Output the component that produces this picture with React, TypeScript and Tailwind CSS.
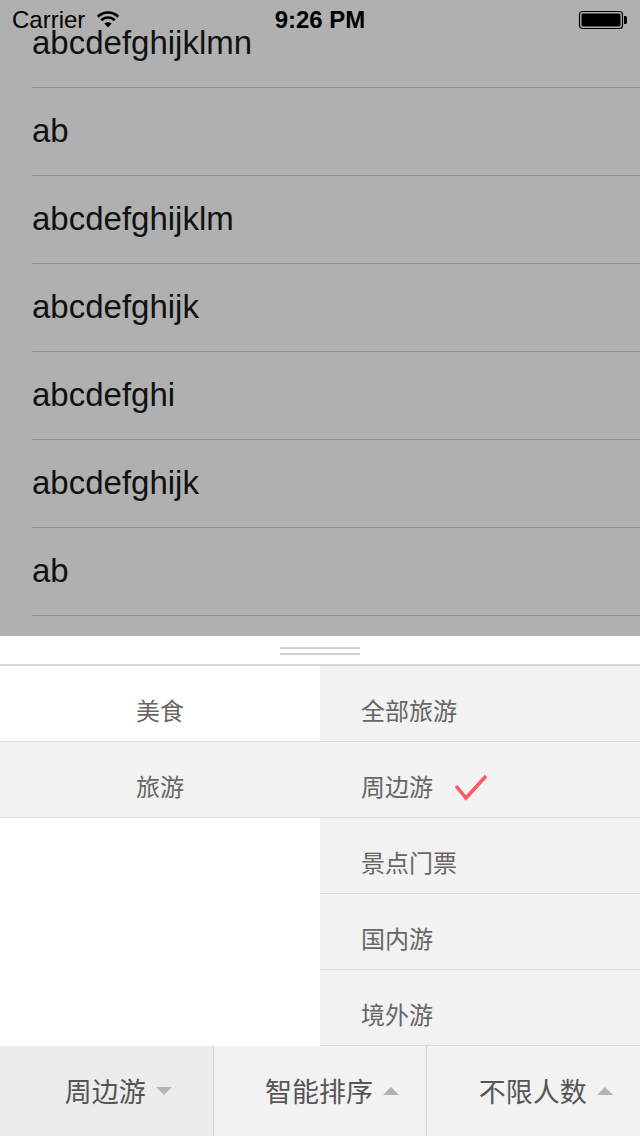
const rows = ["abcdefghijklmn", "ab", "abcdefghijklm", "abcdefghijk", "abcdefghi", "abcdefghijk", "ab", "abcdefg"];
const leftItems = ["美食", "旅游"];
const rightItems = ["全部旅游", "周边游", "景点门票", "国内游", "境外游"];
const tabs = [
  { label: "周边游", down: true },
  { label: "智能排序", down: false },
  { label: "不限人数", down: false },
];

const cjk = "font-['Noto_Sans_CJK_SC',sans-serif]";

const Wifi = () => (
  <svg width="24" height="17" viewBox="0 0 24 17" className="ml-[11px] mt-[-2px]">
    <path d="M1.75 5.75 A14.5 14.5 0 0 1 22.25 5.75" fill="none" stroke="#000" strokeWidth="2.6" />
    <path d="M5.28 9.28 A9.5 9.5 0 0 1 18.72 9.28" fill="none" stroke="#000" strokeWidth="2.6" />
    <path d="M12 16.5 L8.4 12.6 A5 5 0 0 1 15.6 12.6 Z" fill="#000" />
  </svg>
);

const Battery = () => (
  <svg width="50" height="20" viewBox="0 0 50 20">
    <rect x="1.5" y="1.5" width="43" height="17" rx="3" fill="none" stroke="#000" strokeWidth="1.2" />
    <rect x="3.5" y="3.5" width="39" height="13" rx="1.5" fill="#000" />
    <path d="M46 6 h1.5 a1.5 1.5 0 0 1 1.5 1.5 v5 a1.5 1.5 0 0 1 -1.5 1.5 h-1.5 Z" fill="#000" />
  </svg>
);

const Check = () => (
  <svg width="36" height="28" viewBox="0 0 36 28" className="ml-5 mt-[2px]">
    <polyline points="3,13 13,25 33,3" fill="none" stroke="#ff5a5f" strokeWidth="3.5" />
  </svg>
);

const Tri = ({ down }: { down: boolean }) => (
  <svg width="16" height="8" viewBox="0 0 16 8" className="ml-[10px]">
    <polygon points={down ? "0,0 16,0 8,8" : "0,8 16,8 8,0"} fill="#b3b3b3" />
  </svg>
);

export default function App() {
  return (
    <div className="relative flex h-[1136px] w-[640px] flex-col overflow-hidden bg-[#b0b0b0] font-['Liberation_Sans',Arial,sans-serif]">
      {/* status bar */}
      <div className="absolute left-0 top-0 flex h-[40px] w-full items-center px-3 text-[24px] leading-none text-black">
        <div className="flex flex-1 items-center">
          <span>Carrier</span>
          <Wifi />
        </div>
        <span className="font-bold">9:26 PM</span>
        <div className="flex flex-1 justify-end">
          <Battery />
        </div>
      </div>

      {/* list */}
      <div className="h-[636px] overflow-hidden">
        {rows.map((r, i) => (
          <div key={i} className="pl-8">
            <div className="flex h-[88px] items-center border-b border-[#8c8c8c] pb-px text-[33px] text-[#111]">
              {r}
            </div>
          </div>
        ))}
      </div>

      {/* filter panel */}
      <div className="flex h-[500px] flex-col bg-white">
        <div className="flex h-[30px] flex-col items-center gap-[4px] border-b-2 border-[#d8d8d8] pt-[11px]">
          <div className="h-[2px] w-[80px] bg-[#cfcfcf]" />
          <div className="h-[2px] w-[80px] bg-[#cfcfcf]" />
        </div>

        <div className={`flex h-[380px] text-[24px] text-[#666] ${cjk}`}>
          <div className="w-[320px] bg-white">
            {leftItems.map((t, i) => (
              <div
                key={t}
                className={`flex h-[76px] items-center justify-center border-b border-[#dcdcdc] pt-[12px] ${i === 1 ? "bg-[#f2f2f2]" : "bg-white"}`}
              >
                {t}
              </div>
            ))}
          </div>
          <div className="w-[320px] bg-[#f2f2f2]">
            {rightItems.map((t) => (
              <div key={t} className="flex h-[76px] items-center border-b border-[#dcdcdc] pl-[41px] pt-[12px]">
                {t}
                {t === "周边游" && <Check />}
              </div>
            ))}
          </div>
        </div>

        <div className={`flex h-[90px] text-[27px] text-[#555] ${cjk}`}>
          {tabs.map((tab, i) => (
            <div
              key={tab.label}
              className={`flex flex-1 items-center justify-center pl-6 ${i === 0 ? "bg-[#ececec]" : "border-l border-[#d4d4d4] bg-[#f2f2f2]"}`}
            >
              <span>{tab.label}</span>
              <Tri down={tab.down} />
            </div>
          ))}
        </div>
      </div>
    </div>
  );
}
